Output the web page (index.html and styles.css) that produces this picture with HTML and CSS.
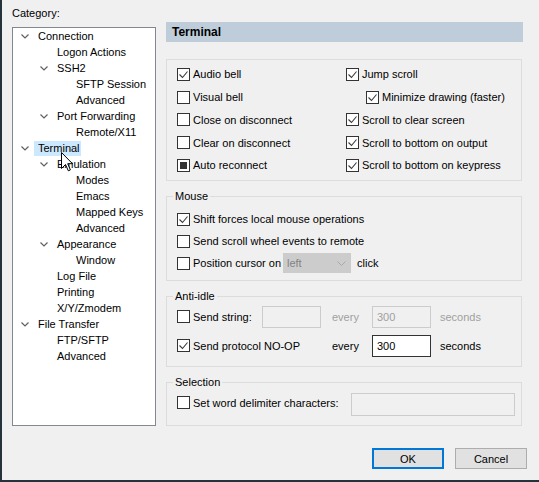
FILE: index.html
```html
<!DOCTYPE html>
<html>
<head>
<meta charset="utf-8">
<title>Session Options</title>
<link rel="stylesheet" href="styles.css">
</head>
<body>
<div class="window">
  <div class="main">
    <div class="left">
      <div class="cat-label">Category:</div>
      <div class="tree">
        <div class="node l0"><span class="chev"><svg width="8" height="5" viewBox="0 0 8 5"><path d="M0.5 0.5L4 4L7.5 0.5" fill="none" stroke="#606060" stroke-width="1.2"/></svg></span><span class="lbl">Connection</span></div>
        <div class="node l1"><span class="chev"></span><span class="lbl">Logon Actions</span></div>
        <div class="node l1"><span class="chev"><svg width="8" height="5" viewBox="0 0 8 5"><path d="M0.5 0.5L4 4L7.5 0.5" fill="none" stroke="#606060" stroke-width="1.2"/></svg></span><span class="lbl">SSH2</span></div>
        <div class="node l2"><span class="chev"></span><span class="lbl">SFTP Session</span></div>
        <div class="node l2"><span class="chev"></span><span class="lbl">Advanced</span></div>
        <div class="node l1"><span class="chev"><svg width="8" height="5" viewBox="0 0 8 5"><path d="M0.5 0.5L4 4L7.5 0.5" fill="none" stroke="#606060" stroke-width="1.2"/></svg></span><span class="lbl">Port Forwarding</span></div>
        <div class="node l2"><span class="chev"></span><span class="lbl">Remote/X11</span></div>
        <div class="node l0"><span class="chev"><svg width="8" height="5" viewBox="0 0 8 5"><path d="M0.5 0.5L4 4L7.5 0.5" fill="none" stroke="#606060" stroke-width="1.2"/></svg></span><span class="lbl sel">Terminal</span></div>
        <div class="node l1"><span class="chev"><svg width="8" height="5" viewBox="0 0 8 5"><path d="M0.5 0.5L4 4L7.5 0.5" fill="none" stroke="#606060" stroke-width="1.2"/></svg></span><span class="lbl">Emulation</span></div>
        <div class="node l2"><span class="chev"></span><span class="lbl">Modes</span></div>
        <div class="node l2"><span class="chev"></span><span class="lbl">Emacs</span></div>
        <div class="node l2"><span class="chev"></span><span class="lbl">Mapped Keys</span></div>
        <div class="node l2"><span class="chev"></span><span class="lbl">Advanced</span></div>
        <div class="node l1"><span class="chev"><svg width="8" height="5" viewBox="0 0 8 5"><path d="M0.5 0.5L4 4L7.5 0.5" fill="none" stroke="#606060" stroke-width="1.2"/></svg></span><span class="lbl">Appearance</span></div>
        <div class="node l2"><span class="chev"></span><span class="lbl">Window</span></div>
        <div class="node l1"><span class="chev"></span><span class="lbl">Log File</span></div>
        <div class="node l1"><span class="chev"></span><span class="lbl">Printing</span></div>
        <div class="node l1"><span class="chev"></span><span class="lbl">X/Y/Zmodem</span></div>
        <div class="node l0"><span class="chev"><svg width="8" height="5" viewBox="0 0 8 5"><path d="M0.5 0.5L4 4L7.5 0.5" fill="none" stroke="#606060" stroke-width="1.2"/></svg></span><span class="lbl">File Transfer</span></div>
        <div class="node l1"><span class="chev"></span><span class="lbl">FTP/SFTP</span></div>
        <div class="node l1"><span class="chev"></span><span class="lbl">Advanced</span></div>
      </div>
    </div>

    <div class="right">
      <div class="header">Terminal</div>

      <div class="box">
        <div class="grid2">
          <div class="row"><span class="cb"><svg width="11" height="11" viewBox="0 0 11 11"><path d="M1.5 5.5L4.5 8.5L9.5 2.5" fill="none" stroke="#3a3a3a" stroke-width="1.1"/></svg></span>Audio bell</div>
          <div class="row"><span class="cb"><svg width="11" height="11" viewBox="0 0 11 11"><path d="M1.5 5.5L4.5 8.5L9.5 2.5" fill="none" stroke="#3a3a3a" stroke-width="1.1"/></svg></span>Jump scroll</div>
          <div class="row"><span class="cb"></span>Visual bell</div>
          <div class="row indent"><span class="cb"><svg width="11" height="11" viewBox="0 0 11 11"><path d="M1.5 5.5L4.5 8.5L9.5 2.5" fill="none" stroke="#3a3a3a" stroke-width="1.1"/></svg></span>Minimize drawing (faster)</div>
          <div class="row"><span class="cb"></span>Close on disconnect</div>
          <div class="row"><span class="cb"><svg width="11" height="11" viewBox="0 0 11 11"><path d="M1.5 5.5L4.5 8.5L9.5 2.5" fill="none" stroke="#3a3a3a" stroke-width="1.1"/></svg></span>Scroll to clear screen</div>
          <div class="row"><span class="cb"></span>Clear on disconnect</div>
          <div class="row"><span class="cb"><svg width="11" height="11" viewBox="0 0 11 11"><path d="M1.5 5.5L4.5 8.5L9.5 2.5" fill="none" stroke="#3a3a3a" stroke-width="1.1"/></svg></span>Scroll to bottom on output</div>
          <div class="row"><span class="cb mixed"></span>Auto reconnect</div>
          <div class="row"><span class="cb"><svg width="11" height="11" viewBox="0 0 11 11"><path d="M1.5 5.5L4.5 8.5L9.5 2.5" fill="none" stroke="#3a3a3a" stroke-width="1.1"/></svg></span>Scroll to bottom on keypress</div>
        </div>
      </div>

      <fieldset class="grp mouse">
        <legend>Mouse</legend>
        <div class="mrow"><span class="cb"><svg width="11" height="11" viewBox="0 0 11 11"><path d="M1.5 5.5L4.5 8.5L9.5 2.5" fill="none" stroke="#3a3a3a" stroke-width="1.1"/></svg></span>Shift forces local mouse operations</div>
        <div class="mrow"><span class="cb"></span>Send scroll wheel events to remote</div>
        <div class="mrow">
          <span class="pos-lab"><span class="cb"></span>Position cursor on</span>
          <span class="select">left<svg width="9" height="5" viewBox="0 0 9 5"><path d="M0.5 0.5L4.5 4.5L8.5 0.5" fill="none" stroke="#a9a9a9" stroke-width="1"/></svg></span>
          <span class="after">click</span>
        </div>
      </fieldset>

      <fieldset class="grp anti">
        <legend>Anti-idle</legend>
        <div class="agrid">
          <div class="row"><span class="cb"></span>Send string:</div>
          <div class="cell"><span class="inp dis"></span></div>
          <div class="cell dim">every</div>
          <div class="cell"><span class="inp dis">300</span></div>
          <div class="cell dim">seconds</div>

          <div class="row span2"><span class="cb"><svg width="11" height="11" viewBox="0 0 11 11"><path d="M1.5 5.5L4.5 8.5L9.5 2.5" fill="none" stroke="#3a3a3a" stroke-width="1.1"/></svg></span>Send protocol NO-OP</div>
          <div class="cell">every</div>
          <div class="cell"><span class="inp">300</span></div>
          <div class="cell">seconds</div>
        </div>
      </fieldset>

      <fieldset class="grp selection">
        <legend>Selection</legend>
        <div class="srow">
          <div class="slab"><span class="cb"></span>Set word delimiter characters:</div>
          <span class="inp dis wide"></span>
        </div>
      </fieldset>
    </div>
  </div>

  <div class="buttons">
    <div class="btn default">OK</div>
    <div class="btn">Cancel</div>
  </div>
</div>

<svg class="cursor" width="13" height="20" viewBox="0 0 13 20"><path d="M0.5 0.5V16.5L4.5 12.5L7.3 18.8L9.4 17.9L6.7 11.7H11.5Z" fill="#fff" stroke="#000" stroke-width="1" stroke-linejoin="miter"/></svg>
</body>
</html>
```

FILE: styles.css
```css
* {
  box-sizing: border-box;
}

html,
body {
  margin: 0;
  padding: 0;
}

body {
  width: 539px;
  height: 482px;
  overflow: hidden;
  position: relative;
  background: #f0f0f0;
  color: #000;
  font-family: "Liberation Sans", Arial, sans-serif;
  font-size: 11px;
}

.window {
  width: 539px;
  height: 482px;
  border-left: 2px solid #24323b;
  border-bottom: 2px solid #24323b;
  padding: 5px 12px 0 10px;
  display: flex;
  flex-direction: column;
}

.main {
  display: flex;
  gap: 10px;
}

/* ---------- category tree ---------- */
.left {
  width: 144px;
  display: flex;
  flex-direction: column;
}

.cat-label {
  height: 16px;
  line-height: 16px;
}

.tree {
  margin-top: 6px;
  height: 399px;
  background: #fff;
  border: 1px solid #828790;
}

.node {
  height: 16px;
  display: flex;
  align-items: center;
  white-space: nowrap;
}

.l0 { padding-left: 8px; }
.l1 { padding-left: 27px; }
.l2 { padding-left: 46px; }

.chev {
  width: 8px;
  height: 5px;
  display: flex;
  flex: none;
}

.chev svg {
  display: block;
}

.lbl {
  margin-left: 5px;
  padding: 0 1px 0 4px;
  line-height: 15px;
}

.lbl.sel {
  background: #cce8ff;
}

/* ---------- right panel ---------- */
.right {
  width: 357px;
  display: flex;
  flex-direction: column;
}

.header {
  margin-top: 17px;
  height: 20px;
  line-height: 20px;
  padding-left: 6px;
  background: #bfcddb;
  font-weight: bold;
  font-size: 12px;
}

.box {
  margin-top: 17px;
  width: 356px;
  border: 1px solid #dcdcdc;
  padding: 3px 10px 0;
  height: 122px;
}

.grid2 {
  display: grid;
  grid-template-columns: 169px 1fr;
  grid-auto-rows: 22.75px;
}

.row,
.mrow {
  display: flex;
  align-items: center;
  white-space: nowrap;
}

.mrow {
  height: 22px;
}

.indent {
  padding-left: 20px;
}

.cb {
  width: 13px;
  height: 13px;
  flex: none;
  margin-right: 3px;
  border: 1px solid #333;
  background: #fff;
  display: flex;
  align-items: center;
  justify-content: center;
}

.cb svg {
  display: block;
}

.cb.mixed::after {
  content: "";
  width: 7px;
  height: 7px;
  background: #333;
}

/* ---------- group boxes ---------- */
.grp {
  margin: 7px 0 0;
  width: 356px;
  min-width: 0;
  border: 1px solid #dcdcdc;
}

.grp legend {
  padding: 0 2px;
  margin-left: -4px;
  line-height: 16px;
}

.mouse {
  padding: 4px 10px 6px;
}

.anti {
  padding: 1px 10px 9px;
}

.selection {
  padding: 3px 10px 9px;
}

.pos-lab {
  width: 106px;
  display: flex;
  align-items: center;
}

.select {
  width: 68px;
  height: 20px;
  padding: 0 5px 0 4px;
  background: #cccccc;
  color: #838383;
  display: flex;
  align-items: center;
  justify-content: space-between;
}

.after {
  margin-left: 6px;
}

.agrid {
  display: grid;
  grid-template-columns: 85px 70px 40px 68px auto;
  grid-auto-rows: 23px;
  row-gap: 6px;
}

.span2 {
  grid-column: span 2;
}

.cell {
  display: flex;
  align-items: center;
  white-space: nowrap;
}

.dim {
  color: #a0a0a0;
}

.inp {
  width: 59px;
  height: 22px;
  padding-left: 4px;
  border: 1px solid #333;
  background: #fff;
  display: flex;
  align-items: center;
}

.inp.dis {
  border-color: #cccccc;
  background: #f0f0f0;
  color: #a0a0a0;
}

.srow {
  display: flex;
  align-items: flex-start;
}

.slab {
  width: 174px;
  height: 19px;
  flex: none;
  display: flex;
  align-items: center;
  white-space: nowrap;
}

.inp.wide {
  width: 164px;
  height: 23px;
  flex: none;
}

/* ---------- buttons ---------- */
.buttons {
  margin-top: 22px;
  display: flex;
  justify-content: flex-end;
  gap: 11px;
}

.btn {
  width: 72px;
  height: 21px;
  background: #e1e1e1;
  border: 1px solid #adadad;
  display: flex;
  align-items: center;
  justify-content: center;
}

.btn.default {
  border: 2px solid #0078d7;
}

/* mouse pointer hovering over the tree */
.cursor {
  position: absolute;
  left: 61px;
  top: 152px;
}
```
